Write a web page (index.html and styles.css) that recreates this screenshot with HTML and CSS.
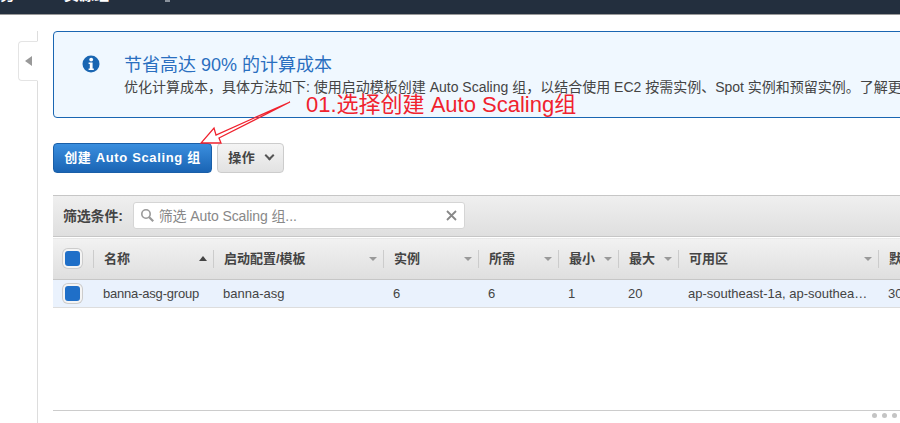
FILE: index.html
```html
<!DOCTYPE html>
<html lang="zh-CN">
<head>
    <meta charset="UTF-8">
    <title>Auto Scaling 组</title>
    <link rel="stylesheet" href="styles.css">
</head>
<body>
<div class="topbar"><span class="topbar-text topbar-first">务</span><span class="topbar-text topbar-second">资源组</span><span class="topbar-icon"></span></div>

<div class="page">
    <div class="side">
        <div class="side-tab"><span class="side-arrow"></span></div>
    </div>

    <div class="content">
        <div class="banner">
            <svg class="banner-icon" width="18" height="18" viewBox="0 0 18 18">
                <circle cx="9" cy="9" r="8.5" fill="#1a66b2"/>
                <circle cx="9.2" cy="4.6" r="1.9" fill="#fff"/>
                <path d="M6.6 7.4h4v6h1.2v1.6H6.6v-1.6h1.2V9H6.6z" fill="#fff"/>
            </svg>
            <div>
                <div class="banner-title">节省高达 90% 的计算成本</div>
                <div class="banner-text">优化计算成本，具体方法如下: 使用启动模板创建 Auto Scaling 组，以结合使用 EC2 按需实例、Spot 实例和预留实例。了解更多</div>
            </div>
        </div>

        <div class="actions">
            <button class="btn btn-primary">创建 Auto Scaling 组</button>
            <button class="btn btn-default">操作 <span class="chevron"></span></button>
        </div>

        <div class="filter-bar">
            <span class="filter-label">筛选条件:</span>
            <div class="search">
                <svg width="15" height="15" viewBox="0 0 15 15" fill="none" stroke="#999">
                    <circle cx="6" cy="6" r="4.2" stroke-width="1.6"/>
                    <path d="M9.2 9.2l4 4" stroke-width="2.2"/>
                </svg>
                <span class="search-text">筛选 Auto Scaling 组...</span>
                <svg class="search-clear" width="11" height="11" viewBox="0 0 11 11">
                    <path d="M1 1l9 9M10 1l-9 9" stroke="#888" stroke-width="1.8" fill="none"/>
                </svg>
            </div>
        </div>

        <table class="grid">
            <colgroup>
                <col class="c-check"><col class="c-name"><col class="c-config"><col class="c-inst">
                <col class="c-want"><col class="c-num"><col class="c-num"><col class="c-zone"><col class="c-last">
            </colgroup>
            <thead>
                <tr>
                    <th><span class="check"></span></th>
                    <th><div class="th-in">名称<span class="sort-up"></span></div></th>
                    <th><div class="th-in">启动配置/模板<span class="sort"></span></div></th>
                    <th><div class="th-in">实例<span class="sort"></span></div></th>
                    <th><div class="th-in">所需<span class="sort"></span></div></th>
                    <th><div class="th-in">最小<span class="sort"></span></div></th>
                    <th><div class="th-in">最大<span class="sort"></span></div></th>
                    <th><div class="th-in">可用区<span class="sort"></span></div></th>
                    <th><div class="th-in">默认冷却</div></th>
                </tr>
            </thead>
            <tbody>
                <tr>
                    <td><span class="check"></span></td>
                    <td class="name-cell">banna-asg-group</td>
                    <td>banna-asg</td>
                    <td>6</td>
                    <td>6</td>
                    <td>1</td>
                    <td>20</td>
                    <td><div class="clip">ap-southeast-1a, ap-southeast-1b</div></td>
                    <td>300</td>
                </tr>
            </tbody>
        </table>

        <div class="spacer"></div>
        <div class="footer-line"></div>
        <div class="dots"><span></span><span></span><span></span></div>
    </div>
</div>

<!-- red annotation drawn over the screenshot -->
<div class="note">01.选择创建 Auto Scaling组</div>
<svg class="note-arrow" width="110" height="60" viewBox="0 0 110 60">
    <path d="M92 5L18 38l-2-7L3 46l20 0-2-5L92 5" fill="none" stroke="#f0222e" stroke-width="1.3"/>
</svg>
</body>
</html>
```

FILE: styles.css
```css
* {
    box-sizing: border-box;
}

html, body {
    margin: 0;
    height: 423px;
    overflow: hidden;
}

body {
    position: relative;
    font-family: "Liberation Sans", "Noto Sans CJK SC", sans-serif;
    font-size: 13px;
    color: #444;
    background: #fff;
}

.topbar {
    height: 15px;
    background: #232f3e;
    border-bottom: 1px solid #999;
    overflow: hidden;
    display: flex;
}

.topbar-text {
    color: #fff;
    font-size: 15px;
    font-weight: bold;
    line-height: 15px;
    margin-top: -13px;
}

.topbar-first {
    width: 64px;
}

.topbar-second {
    width: 101px;
}

.topbar-icon {
    width: 5px;
    height: 2px;
    background: #8a929c;
}

.page {
    display: flex;
    height: 408px;
}

.side {
    width: 53px;
    flex: none;
    padding: 16px 0 0 18px;
}

.side-tab {
    width: 20px;
    height: 100%;
    border-right: 1px solid #ddd;
    padding-top: 10px;
}

.side-arrow {
    display: flex;
    align-items: center;
    justify-content: center;
    width: 20px;
    height: 40px;
    background: #fff;
    border: 1px solid #e4e4e4;
    border-right: 1px solid #fff;
    border-radius: 4px 0 0 4px;
}

.side-arrow::before {
    content: "";
    border-style: solid;
    border-width: 5.5px 7px 5.5px 0;
    border-color: transparent #999 transparent transparent;
}

.content {
    flex: 1;
    min-width: 0;
    padding-top: 16px;
    display: flex;
    flex-direction: column;
}

.banner {
    width: 960px;
    height: 87px;
    flex: none;
    display: flex;
    align-items: flex-start;
    gap: 24px;
    padding: 21px 0 0 28px;
    background: #f0f8ff;
    border: 1px solid #1a66b2;
    border-radius: 4px;
}

.banner-icon {
    flex: none;
    margin-top: 2px;
}

.banner-title {
    font-size: 18px;
    line-height: 24px;
    color: #2a6fc0;
}

.banner-text {
    margin-top: 1px;
    font-size: 14px;
    line-height: 18px;
    color: #444;
    white-space: nowrap;
}

.actions {
    display: flex;
    gap: 5px;
    margin-top: 25px;
    flex: none;
}

.btn {
    height: 30px;
    border-radius: 4px;
    font-family: inherit;
    font-size: 13px;
    font-weight: bold;
    padding: 0 0 3px;
    letter-spacing: 0.65px;
}

.btn-primary {
    width: 159px;
    color: #fff;
    background: linear-gradient(#3a8ede, #1a64b4);
    border: 1px solid #1a5fa8;
}

.btn-default {
    width: 67px;
    color: #444;
    background: linear-gradient(#f4f4f4, #e2e2e2);
    border: 1px solid #ccc;
}

.chevron {
    display: inline-block;
    width: 7px;
    height: 7px;
    margin: 0 0 3px 6px;
    border-right: 2px solid #555;
    border-bottom: 2px solid #555;
    transform: rotate(45deg);
}

.filter-bar {
    display: flex;
    align-items: center;
    gap: 10px;
    flex: none;
    width: 847px;
    height: 42px;
    margin-top: 22px;
    padding-left: 10px;
    background: linear-gradient(#efefef, #dfdfdf);
    border-top: 1px solid #c6c6c6;
    border-bottom: 1px solid #c6c6c6;
}

.filter-label {
    font-size: 14px;
    font-weight: bold;
    letter-spacing: -0.2px;
    color: #444;
    margin-top: -2px;
}

.search {
    display: flex;
    align-items: center;
    width: 332px;
    height: 27px;
    margin-top: -1px;
    padding: 0 7px 0 6px;
    background: #fff;
    border: 1px solid #d5d5d5;
    border-radius: 3px;
}

.search-text {
    margin-left: 4px;
    margin-top: -2px;
    font-size: 14px;
    letter-spacing: -0.1px;
    color: #888;
}

.search-clear {
    margin-left: auto;
}

.grid {
    table-layout: fixed;
    width: 947px;
    border-collapse: collapse;
    flex: none;
}

.c-check { width: 40px; }
.c-name { width: 120px; }
.c-config { width: 170px; }
.c-inst { width: 95px; }
.c-want { width: 80px; }
.c-num { width: 60px; }
.c-zone { width: 200px; }
.c-last { width: 122px; }

.grid th {
    height: 42px;
    padding: 0;
    text-align: left;
    font-weight: bold;
    color: #444;
    background: linear-gradient(#f2f2f2, #dedede);
    border-top: 1px solid #fff;
    border-bottom: 1px solid #c6c6c6;
}

.th-in {
    position: relative;
    height: 18px;
    line-height: 18px;
    padding: 0 10px;
    border-left: 1px solid #ccc;
    white-space: nowrap;
}

.sort, .sort-up {
    position: absolute;
    right: 6px;
    top: 7px;
    border-style: solid;
    border-color: #999 transparent transparent;
    border-width: 4px 4px 0;
}

.sort-up {
    top: 6px;
    border-color: transparent transparent #444;
    border-width: 0 4px 5px;
}

.grid td {
    height: 28px;
    padding: 0 0 0 10px;
    color: #444;
    background: #eaf2fd;
    border-bottom: 1px solid #ddd;
    white-space: nowrap;
}

.grid th:first-child, .grid td:first-child {
    padding: 0 0 0 12px;
}

.grid .name-cell {
    letter-spacing: -0.2px;
}

.clip {
    width: 180px;
    overflow: hidden;
    text-overflow: ellipsis;
}

.check {
    display: block;
    width: 15px;
    height: 15px;
    background: #1f6fc8;
    border-radius: 3px;
    box-shadow: 0 0 0 2px #f4f4f4, 0 0 0 3px #ccc;
}

.spacer {
    height: 102px;
    flex: none;
}

.footer-line {
    height: 1px;
    background: #ccc;
    flex: none;
}

.dots {
    display: flex;
    justify-content: flex-end;
    gap: 5px;
    margin-top: 2px;
    padding-right: 3px;
}

.dots span {
    width: 5px;
    height: 5px;
    border-radius: 50%;
    background: #c4c4c4;
}

.note {
    position: absolute;
    left: 306px;
    top: 91px;
    font-size: 22px;
    line-height: 28px;
    color: #f0222e;
    white-space: nowrap;
}

.note-arrow {
    position: absolute;
    left: 198px;
    top: 97px;
}
```
